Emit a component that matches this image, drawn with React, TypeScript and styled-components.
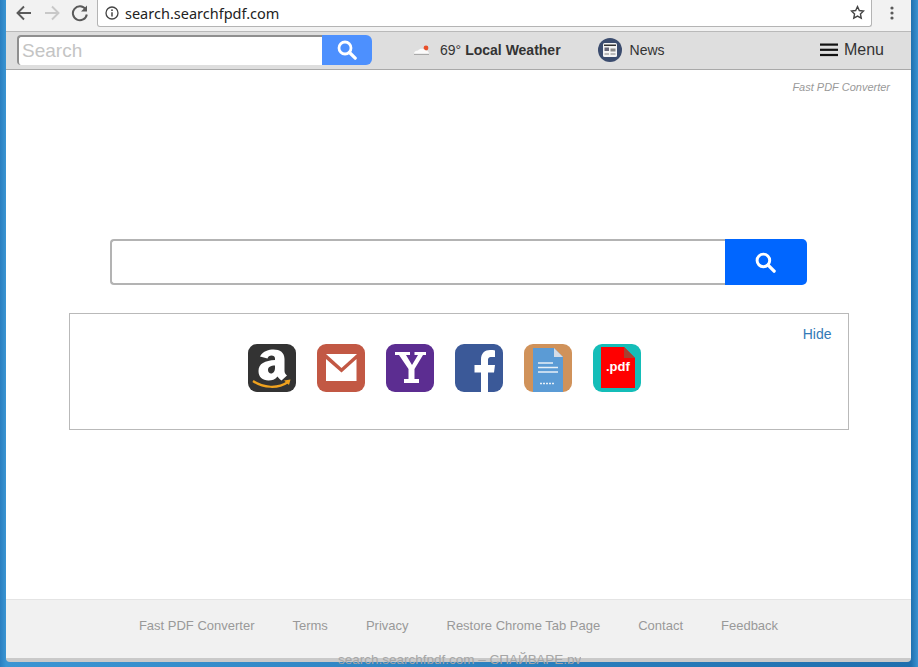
import React from "react";
import styled, { createGlobalStyle } from "styled-components";

const GlobalStyle = createGlobalStyle`
  html, body {
    margin: 0;
    padding: 0;
    height: 100%;
    overflow: hidden;
    background: #2f83c4;
    font-family: "Liberation Sans", Arial, sans-serif;
  }
`;

const Desktop = styled.div`
  width: 918px;
  height: 667px;
  padding: 0 7px 5px 6px;
  box-sizing: border-box;
  background: linear-gradient(90deg, #2a7fc0 0, #3b95d3 6px, #1f6fae 911px, #3a93d2 918px);
  position: relative;
  overflow: hidden;
`;

const Window = styled.div`
  height: 100%;
  display: flex;
  flex-direction: column;
  background: #fff;
  border-radius: 0 0 4px 4px;
  overflow: hidden;
  border-bottom: 4px solid #c9c9c9;
  box-sizing: border-box;
`;

const BrowserBar = styled.div`
  height: 32px;
  flex: none;
  box-sizing: border-box;
  display: flex;
  align-items: flex-start;
  background: #f2f2f2;
  border-bottom: 1px solid #b9b9b9;
  padding-left: 4px;
`;

const NavButton = styled.button`
  width: 28px;
  height: 26px;
  padding: 0;
  border: 0;
  background: none;
  display: flex;
  align-items: center;
  justify-content: center;
`;

const UrlBox = styled.div`
  margin-left: 3px;
  width: 775px;
  height: 27px;
  box-sizing: border-box;
  display: flex;
  align-items: center;
  background: #fff;
  border: 1px solid #b4b4b4;
  border-top: 0;
  border-radius: 0 0 3px 3px;
  padding: 0 6px 1px 7px;
  font-size: 15px;
  color: #222;
  font-family: "Noto Sans", "Open Sans", sans-serif;
`;

const UrlText = styled.span`
  margin-left: 6px;
  flex: 1;
  font-size: 14.5px;
`;

const MenuDots = styled.div`
  margin-left: 6px;
  width: 28px;
  height: 26px;
  display: flex;
  align-items: center;
  justify-content: center;
`;

const PortalBar = styled.div`
  height: 38px;
  flex: none;
  box-sizing: border-box;
  display: flex;
  align-items: center;
  background: #dedede;
  border-bottom: 1px solid #a9a9a9;
  padding: 0 27px 1px 11px;
  color: #333;
`;

const SearchGroup = styled.div`
  display: flex;
  width: 355px;
  height: 30px;
`;

const SmallInput = styled.div`
  width: 305px;
  box-sizing: border-box;
  background: #fff;
  border-top: 2px solid #8f8f8f;
  border-left: 2px solid #8f8f8f;
  border-radius: 4px 0 0 4px;
  padding: 3px 0 0 3px;
  font-size: 19px;
  color: #c4c4c4;
`;

const SmallButton = styled.div`
  width: 50px;
  background: #4d90fe;
  border-radius: 0 6px 6px 0;
  display: flex;
  align-items: center;
  justify-content: center;
`;

const WeatherLink = styled.div`
  margin-left: 41px;
  display: flex;
  align-items: center;
  font-size: 14px;
`;

const Temp = styled.span`
  margin-left: 9px;
`;

const Bold = styled.b`
  margin-left: 4px;
`;

const NewsLink = styled.div`
  margin-left: 37px;
  display: flex;
  align-items: center;
  gap: 8px;
  font-size: 14px;
`;

const MenuLink = styled.div`
  margin-left: auto;
  display: flex;
  align-items: center;
  gap: 6px;
  font-size: 16px;
`;

const Main = styled.main`
  flex: 1;
  display: flex;
  flex-direction: column;
  align-items: center;
  position: relative;
`;

const Brand = styled.div`
  align-self: flex-end;
  margin: 11px 21px 0 0;
  font-size: 11px;
  font-style: italic;
  color: #999;
`;

const BigSearch = styled.div`
  margin: 146px 0 0 -1px;
  width: 697px;
  height: 46px;
  display: flex;
`;

const BigInput = styled.div`
  flex: 1;
  box-sizing: border-box;
  border: 2px solid #b3b3b3;
  border-right: 0;
  border-radius: 4px 0 0 4px;
  background: #fff;
`;

const BigButton = styled.div`
  width: 82px;
  background: #0066ff;
  border-radius: 0 5px 5px 0;
  display: flex;
  align-items: center;
  justify-content: center;
`;

const Shortcuts = styled.section`
  margin-top: 28px;
  width: 780px;
  height: 117px;
  box-sizing: border-box;
  border: 1px solid #b9b9b9;
  position: relative;
  display: flex;
  justify-content: center;
  padding: 30px 28px 0 0;
  gap: 21px;
`;

const HideLink = styled.a`
  position: absolute;
  top: 12px;
  right: 16px;
  font-size: 14px;
  color: #337ab7;
`;

const Tile = styled.svg`
  width: 48px;
  height: 48px;
  display: block;
`;

const Footer = styled.footer`
  height: 59px;
  flex: none;
  box-sizing: border-box;
  background: #f1f1f1;
  border-top: 1px solid #e4e4e4;
  display: flex;
  justify-content: center;
  gap: 38px;
  padding: 18px 0 0 0;
  font-size: 13px;
  color: #999;
`;

const Watermark = styled.div`
  position: absolute;
  left: 338px;
  top: 652px;
  height: 12px;
  overflow: hidden;
  font-size: 13.5px;
  line-height: 15px;
  white-space: nowrap;
  color: #a6a6a6;
`;

const footerLinks = [
  "Fast PDF Converter",
  "Terms",
  "Privacy",
  "Restore Chrome Tab Page",
  "Contact",
  "Feedback",
];

const Lens = ({ size, color }: { size: number; color: string }) => (
  <svg width={size} height={size} viewBox="0 0 20 20" fill="none">
    <circle cx="8" cy="8" r="6" stroke={color} strokeWidth="2.8" />
    <path d="M12.5 12.5L18.2 18.2" stroke={color} strokeWidth="3.2" strokeLinecap="round" />
  </svg>
);

const App = () => {
  return (
    <Desktop>
      <GlobalStyle />
      <Window>
        <BrowserBar>
          <NavButton>
            <svg width="18" height="18" viewBox="0 0 18 18" fill="none" stroke="#5a5a5a" strokeWidth="1.9">
              <path d="M16 9H3M9 2.5L2.5 9L9 15.5" />
            </svg>
          </NavButton>
          <NavButton>
            <svg width="18" height="18" viewBox="0 0 18 18" fill="none" stroke="#c8c8c8" strokeWidth="1.9">
              <path d="M2 9H15M9 2.5L15.5 9L9 15.5" />
            </svg>
          </NavButton>
          <NavButton>
            <svg width="18" height="18" viewBox="0 0 18 18" fill="none">
              <path d="M14.6 5.2A7 7 0 1 0 15.8 10.5" stroke="#5a5a5a" strokeWidth="2" />
              <path d="M16 1.5V7.5H10Z" fill="#5a5a5a" />
            </svg>
          </NavButton>
          <UrlBox>
            <svg width="14" height="14" viewBox="0 0 14 14" fill="none">
              <circle cx="7" cy="7" r="6" stroke="#444" strokeWidth="1.3" />
              <path d="M7 6.2V10.4" stroke="#444" strokeWidth="1.5" />
              <circle cx="7" cy="4.2" r="0.9" fill="#444" />
            </svg>
            <UrlText>search.searchfpdf.com</UrlText>
            <svg width="15" height="15" viewBox="0 0 24 24" fill="none" stroke="#444" strokeWidth="2.2">
              <path d="M12 2.5l2.9 6.3 6.8.8-5 4.7 1.3 6.8-6-3.4-6 3.4 1.3-6.8-5-4.7 6.8-.8z" />
            </svg>
          </UrlBox>
          <MenuDots>
            <svg width="4" height="14" viewBox="0 0 4 14" fill="#5a5a5a">
              <circle cx="2" cy="2" r="1.6" />
              <circle cx="2" cy="7" r="1.6" />
              <circle cx="2" cy="12" r="1.6" />
            </svg>
          </MenuDots>
        </BrowserBar>
        <PortalBar>
          <SearchGroup>
            <SmallInput>Search</SmallInput>
            <SmallButton>
              <Lens size={20} color="#fff" />
            </SmallButton>
          </SearchGroup>
          <WeatherLink>
            <svg width="18" height="12" viewBox="0 0 18 12">
              <circle cx="13" cy="4" r="2.4" fill="#e8502a" />
              <path d="M1 9.5C1 7.5 3 6.5 5 6.5C6.5 4 11 4 12.5 6.5C14 6.5 16 7.5 16 9.5Z" fill="#fbfbfb" />
              <path d="M1 10H16V11H1Z" fill="#a9a9a9" />
            </svg>
            <Temp>69°</Temp>
            <Bold>Local Weather</Bold>
          </WeatherLink>
          <NewsLink>
            <svg width="24" height="24" viewBox="0 0 24 24">
              <circle cx="12" cy="12" r="12" fill="#3b4c6e" />
              <rect x="5" y="5" width="14" height="14" rx="1.5" fill="#f4f4f4" />
              <rect x="6" y="6.5" width="12" height="1.5" fill="#333" />
              <rect x="6.5" y="9.5" width="4.5" height="3.5" fill="#667" />
              <rect x="12.5" y="10.5" width="5" height="3" fill="#888" />
              <rect x="6.5" y="15" width="4.5" height="2" fill="#bbb" />
              <rect x="12.5" y="15" width="5" height="2" fill="#bbb" />
            </svg>
            News
          </NewsLink>
          <MenuLink>
            <svg width="18" height="14" viewBox="0 0 18 14" fill="#111">
              <rect y="0.5" width="18" height="2.2" />
              <rect y="5.7" width="18" height="2.2" />
              <rect y="10.9" width="18" height="2.2" />
            </svg>
            Menu
          </MenuLink>
        </PortalBar>
        <Main>
          <Brand>Fast PDF Converter</Brand>
          <BigSearch>
            <BigInput />
            <BigButton>
              <Lens size={21} color="#fff" />
            </BigButton>
          </BigSearch>
          <Shortcuts>
            <HideLink>Hide</HideLink>
            <Tile viewBox="0 0 48 48">
              <rect width="48" height="48" rx="9" fill="#333" />
              <path
                fillRule="evenodd"
                fill="#fff"
                d="M12 12.5C15 7 21 5.5 25.5 5.5C32 5.5 36.5 8.5 36.5 15V27C36.5 29 37.5 30 39 31.5L33.5 36.5C31.5 35 30.5 34 29.5 32.5C27 35.5 24 36.5 20.5 36.5C14.5 36.5 10.5 33 10.5 27C10.5 19.5 17 16.5 27 16V14.5C27 12.5 25.5 11.5 23.5 11.5C21.5 11.5 20 12.5 19.5 14.5ZM27 21.5C22.5 21.5 20 23 20 26C20 28 21.5 29.5 23 29.5C25.5 29.5 27 27 27 24Z"
              />
              <path d="M5 37C15 44 30 45 40 38" fill="none" stroke="#f0a21e" strokeWidth="2.2" />
              <path d="M36 36.5L42.5 35.5L41 41Z" fill="#f0a21e" />
            </Tile>
            <Tile viewBox="0 0 48 48">
              <rect width="48" height="48" rx="9" fill="#c25844" />
              <path d="M9 10H40L24.5 24Z" fill="#fff" />
              <path d="M9 15L24.5 28.5L39.5 15V37H9Z" fill="#fff" />
            </Tile>
            <Tile viewBox="0 0 48 48">
              <rect width="48" height="48" rx="9" fill="#5c2d91" />
              <path
                fill="#fff"
                d="M9 8H24V11H20L26 21L32 11H28.5V8H40V11H37L28.5 25V35H33V39H18V35H22.5V25L13 11H9Z"
              />
            </Tile>
            <Tile viewBox="0 0 48 48">
              <rect width="48" height="48" rx="9" fill="#3b5998" />
              <path
                fill="#fff"
                d="M26 48V28.5H19.5V21H26V15.5C26 9 30 6 35 6C37 6 39 6.2 40 6.4V13H36.5C33.5 13 33 14.5 33 16.5V21H40L39 28.5H33V48Z"
              />
            </Tile>
            <Tile viewBox="0 0 48 48">
              <rect width="48" height="48" rx="9" fill="#d0925a" />
              <path d="M9 4H30L39 13V48H9Z" fill="#5b9bd5" />
              <path d="M30 4L39 13H30Z" fill="#d5dce6" />
              <path d="M14 19H29M14 23.5H34M14 28H34" stroke="#e8f0f8" strokeWidth="1.6" />
              <path d="M16 39.5H31" stroke="#e8f0f8" strokeWidth="1.5" strokeDasharray="2 1" />
            </Tile>
            <Tile viewBox="0 0 48 48">
              <rect width="48" height="48" rx="9" fill="#14bdb8" />
              <path d="M8 3H31L42 14V44H8Z" fill="#f00" />
              <path d="M31 3L42 14H31Z" fill="#a8402f" />
              <text x="13" y="27" fontFamily="Liberation Sans, sans-serif" fontSize="13" fontWeight="700" fill="#fff">
                .pdf
              </text>
            </Tile>
          </Shortcuts>
        </Main>
        <Footer>
          {footerLinks.map((label) => (
            <span key={label}>{label}</span>
          ))}
        </Footer>
      </Window>
      <Watermark>search.searchfpdf.com – СПАЙВАРЕ.ру</Watermark>
    </Desktop>
  );
};

export default App;
